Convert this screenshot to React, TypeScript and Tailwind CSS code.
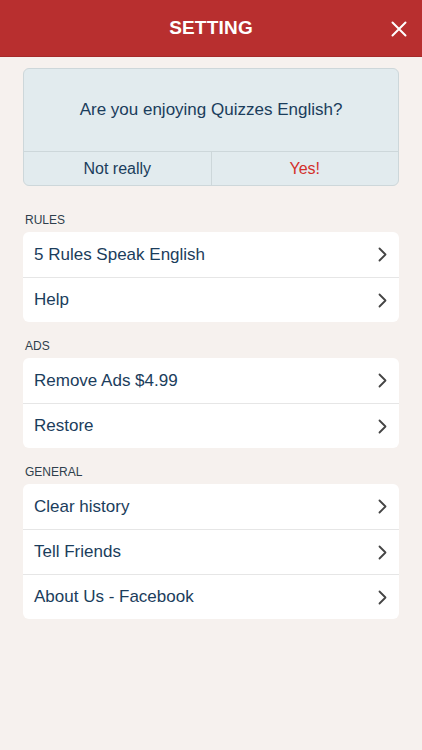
import React from "react";

interface Section {
  title: string;
  items: string[];
}

const sections: Section[] = [
  { title: "RULES", items: ["5 Rules Speak English", "Help"] },
  { title: "ADS", items: ["Remove Ads $4.99", "Restore"] },
  { title: "GENERAL", items: ["Clear history", "Tell Friends", "About Us - Facebook"] },
];

const Chevron = () => (
  <svg width="9" height="15" viewBox="0 0 9 15" fill="none" className="shrink-0">
    <path d="M1.5 1.5L7.5 7.5L1.5 13.5" stroke="#444" strokeWidth="1.8" strokeLinecap="round" strokeLinejoin="round" />
  </svg>
);

const App: React.FC = () => {
  return (
    <div
      className="min-h-[750px] w-full bg-[#f6f1ee] text-[#1b3d5c]"
      style={{ fontFamily: '"Liberation Sans", Arial, sans-serif' }}
    >
      <header className="relative flex h-14 items-center justify-center bg-[#b82f2f] shadow-[0_1px_0_#a52a2a]">
        <h1 className="text-[19px] font-bold tracking-[0.2px] text-white">SETTING</h1>
        <button className="absolute right-[15px] top-[21px] p-0">
          <svg width="16" height="16" viewBox="0 0 16 16" fill="none">
            <path d="M1.5 1.5L14.5 14.5M14.5 1.5L1.5 14.5" stroke="white" strokeWidth="2" strokeLinecap="round" />
          </svg>
        </button>
      </header>

      <div className="px-[23px] pt-3">
        <div className="overflow-hidden rounded-md border border-[#cdd7da] bg-[#e2ebee]">
          <div className="flex h-[82px] items-center justify-center text-[17px]">
            Are you enjoying Quizzes English?
          </div>
          <div className="flex h-[34px] border-t border-[#cdd7da] text-[16px]">
            <button className="flex flex-1 items-center justify-center border-r border-[#cdd7da]">
              Not really
            </button>
            <button className="flex flex-1 items-center justify-center text-[#d32f2a]">Yes!</button>
          </div>
        </div>

        {sections.map((section, idx) => (
          <div key={section.title} className={idx === 0 ? "mt-[27px]" : "mt-[17px]"}>
            <div className="mb-[5px] pl-[2px] text-[12px] leading-[14px] text-[#2f3f4c]">
              {section.title}
            </div>
            <div className="overflow-hidden rounded-md bg-white">
              {section.items.map((item, i) => (
                <div
                  key={item}
                  className={`flex h-[45px] items-center justify-between pl-[11px] pr-[12px] text-[17px] ${
                    i > 0 ? "border-t border-[#e6e6e6]" : ""
                  }`}
                >
                  <span>{item}</span>
                  <Chevron />
                </div>
              ))}
            </div>
          </div>
        ))}
      </div>
    </div>
  );
};

export default App;
